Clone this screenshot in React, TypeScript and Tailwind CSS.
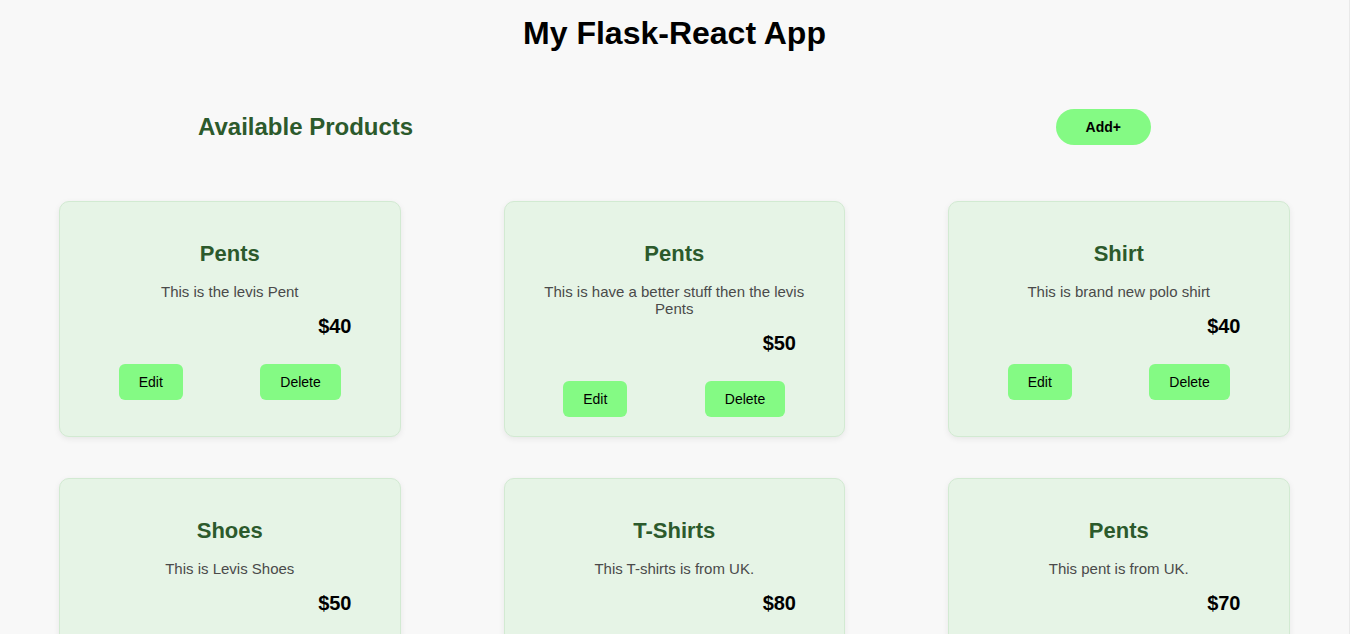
import React from 'react';

interface Product {
  id: number;
  name: string;
  description: string;
  price: number;
}

const products: Product[] = [
  { id: 1, name: 'Pents', description: 'This is the levis Pent', price: 40 },
  { id: 2, name: 'Pents', description: 'This is have a better stuff then the levis Pents', price: 50 },
  { id: 3, name: 'Shirt', description: 'This is brand new polo shirt', price: 40 },
  { id: 4, name: 'Shoes', description: 'This is Levis Shoes', price: 50 },
  { id: 5, name: 'T-Shirts', description: 'This T-shirts is from UK.', price: 80 },
  { id: 6, name: 'Pents', description: 'This pent is from UK.', price: 70 },
];

const ProductCard: React.FC<{ product: Product }> = ({ product }) => {
  return (
    <div className="h-[236px] bg-[#e6f4e6] border border-[#d2ead2] rounded-[10px] shadow-[0_2px_6px_rgba(0,0,0,0.07)] px-5 pt-[39px] pb-5 flex flex-col text-center">
      <h3 className="text-[22px] leading-[26px] font-bold text-[#2c5a2c]">{product.name}</h3>
      <p className="mt-4 text-[15px] leading-[17px] text-[#4a4a4a]">{product.description}</p>
      <p className="mt-[15px] pr-7 text-right text-[20px] leading-[23px] font-bold text-black">${product.price}</p>
      <div className="mt-[26px] flex justify-around">
        <button className="bg-[#84fa84] rounded-[6px] px-5 h-[36px] text-[14px] text-black">Edit</button>
        <button className="bg-[#84fa84] rounded-[6px] px-5 h-[36px] text-[14px] text-black">Delete</button>
      </div>
    </div>
  );
};

export default function App() {
  return (
    <div className="min-h-screen bg-[#f8f8f8] border-r border-[#e9e9e9] font-['Liberation_Sans',Arial,sans-serif]">
      <h1 className="pt-[15px] text-center text-[32px] leading-[37px] font-bold text-black">My Flask-React App</h1>

      <div className="mt-[57px] h-9 flex items-center">
        <h2 className="ml-[198px] text-[24px] leading-[28px] font-bold text-[#2c5a2c]">Available Products</h2>
        <button className="ml-auto mr-[198px] h-9 px-[30px] rounded-full bg-[#84fa84] text-[14px] font-bold text-black">
          Add+
        </button>
      </div>

      <div className="mt-[56px] pl-[59px] grid grid-cols-[repeat(3,341.5px)] gap-x-[103px] gap-y-[41px] pb-10">
        {products.map((p) => (
          <ProductCard key={p.id} product={p} />
        ))}
      </div>
    </div>
  );
}
